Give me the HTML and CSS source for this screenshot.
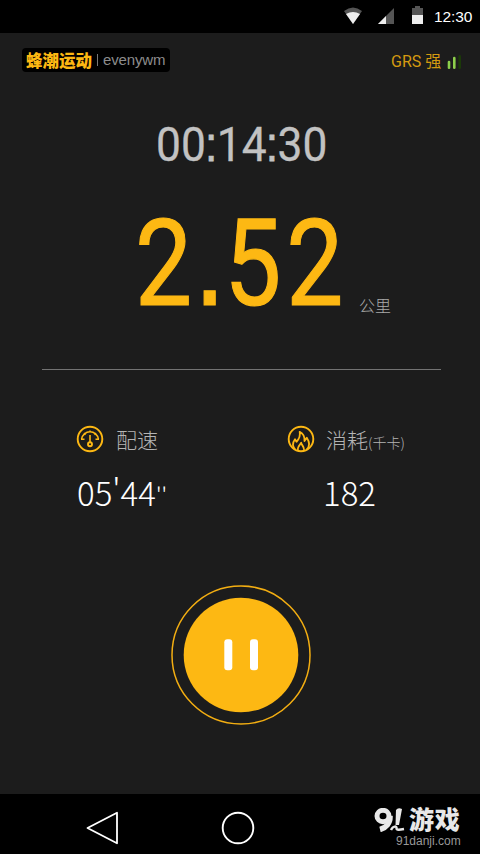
FILE: index.html
```html
<!DOCTYPE html>
<html lang="zh-CN">
<head>
<meta charset="utf-8">
<title>蜂潮运动</title>
<link rel="stylesheet" href="styles.css">
</head>
<body>
<div class="screen">
  <header class="status">
    <svg class="wifi" width="20" height="18" viewBox="0 0 20 18"><path d="M1 4Q10-3 19 4L10 17Z" fill="#555"/><path d="M3 7Q10 3 17 7L10 17Z" fill="#eee"/></svg>
    <svg class="signal" width="17" height="17" viewBox="0 0 17 17"><path d="M0 16L16 0V16Z" fill="#555"/><path d="M0 16L8 8V16Z" fill="#eee"/></svg>
    <svg class="battery" width="11" height="18" viewBox="0 0 11 18"><path d="M0 2H3V0H8V2H11V9H0Z" fill="#555"/><path d="M0 9H11V18H0Z" fill="#eee"/></svg>
    <span class="clock">12:30</span>
  </header>
  <main class="content">
    <div class="topbar">
      <div class="brand"><b class="brand-cn">蜂潮运动</b><i class="brand-line"></i><span class="brand-en">evenywm</span></div>
      <div class="gps"><span class="gps-text">GRS 强</span>
        <svg width="15" height="15" viewBox="0 0 15 15" stroke-width="2.600" stroke-linecap="round"><path d="M2 7V12.700" stroke="#8dcf4b"/><path d="M7.300 3V12.700" stroke="#8dcf4b"/><path d="M12.700 1.300V12.700" stroke="#1b3a08"/></svg>
      </div>
    </div>
    <div class="timer"><span>00<em>:</em>14<em>:</em>30</span></div>
    <div class="distance"><span class="distance-num">2<em>.</em>52</span><span class="unit">公里</span></div>
    <hr class="rule">
    <div class="stats">
      <section class="stat">
        <div class="stat-head">
          <svg width="28" height="28" viewBox="0 0 28 28" fill="none" stroke="#fdb813" stroke-width="1.900"><circle cx="14" cy="14" r="12.300"/><path d="M5 14.300H8.500M19.500 14.300H23M5.600 14A8.500 8.500 0 0 1 22.400 14M8 8L9.600 9.600M14 5.500V7.500M20 8L18.400 9.600M14 10V17.500" stroke-width="1.600"/><circle cx="14" cy="19.300" r="2"/></svg>
          <span class="label">配速</span>
        </div>
        <div class="value pace">05'44<span class="sec">''</span></div>
      </section>
      <section class="stat burn">
        <div class="stat-head">
          <svg width="28" height="28" viewBox="0 0 28 28" fill="none" stroke="#fdb813" stroke-width="1.900" stroke-linejoin="round"><circle cx="14" cy="14" r="12.300"/><path d="M8.200 24.500C5.500 21.500 5.200 18 8 14.200L9.500 16.800C12.500 13.500 13.500 10.500 12.700 6.800C16 8.500 17.800 12 17.500 16L19.800 12.800C23 17.500 22.700 21.500 19.700 24.500M11 25C10.300 22 12.200 20.500 14.200 17.800C14.200 20 17.500 21.500 17 25" stroke-width="1.800"/></svg>
          <span class="label">消耗<small>(千卡)</small></span>
        </div>
        <div class="value kcal">182</div>
      </section>
    </div>
    <svg class="pause" width="142" height="142" viewBox="0 0 142 142"><circle cx="71" cy="71" r="69" fill="none" stroke="#f3ae12" stroke-width="1.500"/><circle cx="71" cy="71" r="57.300" fill="#fdb813"/><rect x="54.300" y="55.200" width="8" height="31" rx="3" fill="#fff"/><rect x="80" y="55.200" width="8" height="31" rx="3" fill="#fff"/></svg>
  </main>
  <footer class="nav">
    <svg class="back" width="34" height="34" viewBox="0 0 34 34" fill="none" stroke="#fff" stroke-width="1.800" stroke-linejoin="round"><path d="M2.500 17L32 1.700V32.300Z"/></svg>
    <svg class="home" width="34" height="34" viewBox="0 0 34 34" fill="none" stroke="#fff" stroke-width="1.900"><circle cx="17" cy="17" r="15.300"/></svg>
    <div class="mark">
      <div class="mark-name"><svg width="31" height="24" viewBox="0 0 31 24" fill="none" stroke="#e8e8e8"><ellipse cx="9" cy="8" rx="6" ry="5.700" stroke-width="5"/><path d="M16 8C16.500 15 12 20 6 21.500" stroke-width="5.500"/><path d="M22 2Q24-1 28 1L25 17H21.500Z" fill="#e8e8e8" stroke="none"/><path d="M17 22C19 17.500 23 18 22.500 20C22 22.500 26 21.800 30 21" stroke-width="2.400"/></svg><b>游戏</b></div>
      <span class="mark-url">91danji.com</span>
    </div>
  </footer>
</div>
</body>
</html>
```

FILE: styles.css
```css
* { box-sizing: border-box; }
body { margin: 0; background: #000; }
em { font-style: normal; }
.screen {
  width: 480px; height: 854px; overflow: hidden;
  display: flex; flex-direction: column;
  font-family: Roboto, "Noto Sans CJK SC", sans-serif;
  white-space: nowrap;
}
.status { height: 33px; background: #000; display: flex; padding: 0 7px 0 343px; color: #fff; }
.status svg { flex: none; }
.wifi { margin-top: 7px; }
.signal { margin: 8px 0 0 15px; }
.battery { margin: 6px 0 0 17px; }
.clock { margin-left: 11px; font: 15.500px/34px "Liberation Sans", sans-serif; letter-spacing: -.1px; }
.content { height: 761px; background: #1c1c1c; display: flex; flex-direction: column; }
.topbar { height: 56px; padding: 15px 18px 0 22px; display: flex; justify-content: space-between; align-items: flex-start; }
.brand { width: 148px; height: 24px; border-radius: 4px; background: #000; display: flex; align-items: center; padding-left: 4px; }
.brand-cn { width: 66px; font: 900 16.500px/24px "Noto Sans CJK SC", sans-serif; color: #fdb813; }
.brand-line { width: 1px; height: 12px; background: #777; margin: 0 5px 0 5px; }
.brand-en { font: 15px/24px "Liberation Sans", sans-serif; letter-spacing: -.15px; color: #8c8c8c; }
.gps { display: flex; color: #d49a10; height: 26px; }
.gps-text { font: 400 16px/27px Roboto, "Noto Sans CJK SC", sans-serif; width: 56px; }
.gps svg { margin-top: 7px; }
.timer { height: 112px; line-height: 112px; font-size: 49px; color: #c2c2c2; padding-left: 155.500px; }
.timer span { display: inline-block; transform: scaleX(.905); transform-origin: left; -webkit-text-stroke: .3px #c2c2c2; }
.timer em { font-family: "Liberation Sans", sans-serif; line-height: 1; margin: 0 -.8px; -webkit-text-stroke: .8px #c2c2c2; }
.distance { height: 125px; display: flex; padding-left: 135px; }
.distance-num { width: 225px; font-size: 121px; line-height: 127px; letter-spacing: 6px; color: #fdb813; transform: scaleX(.84); transform-origin: left; -webkit-text-stroke: 1.200px #fdb813; }
.distance-num em { font: 700 94px/1 "Liberation Sans", sans-serif; margin: 0 -2px 0 2px; }
.unit { font: 300 16px/24px "Noto Sans CJK SC", sans-serif; color: #aaa; margin-top: 92px; margin-left: -1px; }
.rule { width: 399px; height: 1px; border: 0; background: #737373; margin: 43px 0 0 42px; flex: none; }
.stats { display: flex; padding: 55px 0 0 76px; height: 214px; flex: none; }
.stat { width: 211px; flex: none; }
.stat-head { display: flex; height: 28px; }
.label { font: 300 21px/28px "Noto Sans CJK SC", sans-serif; color: #b4b4b4; margin-left: 12px; }
.label small { font-size: 14px; }
.burn .label { margin-left: 11px; }
.value { font: 300 33px/40px "Noto Sans CJK SC", sans-serif; color: #fff; margin-top: 19px; }
.pace { padding-left: 1px; }
.sec { font-size: 22px; }
.kcal { padding-left: 36px; }
.pause { margin-left: 170px; flex: none; }
.nav { height: 60px; background: #000; display: flex; }
.nav svg { flex: none; }
.back { margin: 17px 0 0 85px; }
.home { margin: 17px 0 0 102px; }
.mark { margin: 9px 0 0 119px; color: #e8e8e8; }
.mark-name { height: 29px; display: flex; }
.mark-name svg { margin-top: 5px; }
.mark-name b { font: 900 25px/30px "Noto Sans CJK SC", sans-serif; margin-left: 4px; letter-spacing: .8px; }
.mark-url { display: block; font: 12px/18px "Liberation Sans", sans-serif; color: #999; margin-left: 22px; }
```
